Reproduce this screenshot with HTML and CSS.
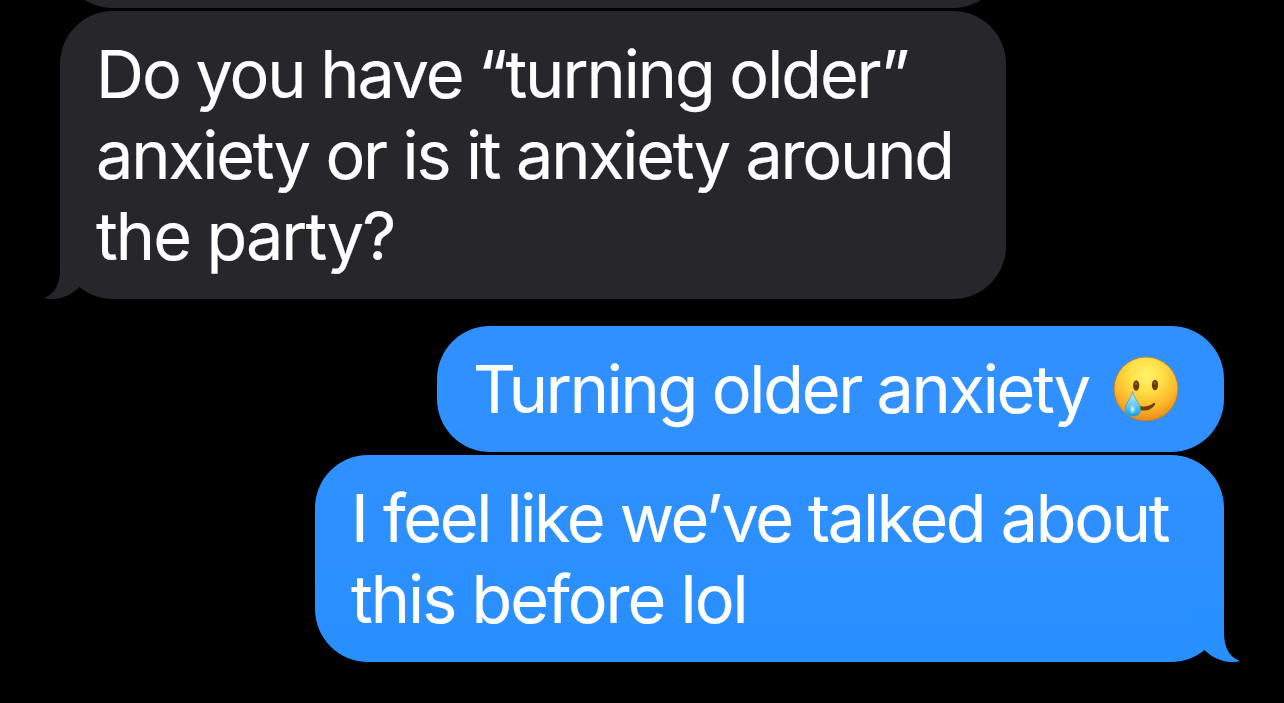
FILE: index.html
```
<!DOCTYPE html>
<html lang="en">
<head>
<meta charset="UTF-8">
<meta name="viewport" content="width=device-width, initial-scale=1.0">
<title>Messages</title>
<link rel="stylesheet" href="styles.css">
</head>
<body>

<div class="chat">
    <div class="bubble received previous"></div>

    <div class="bubble received last">
        <span class="line line-1">Do you have “turning older”</span>
        <span class="line line-2">anxiety or is it anxiety around</span>
        <span class="line line-3">the party?</span>
        <svg class="tail" viewBox="0 0 46 53">
            <path d="M16 0V23C16 37 12 47 0 52.3C13 55 27 50 35.5 41L46 0Z"/>
        </svg>
    </div>

    <div class="bubble sent first">
        <span class="line line-4">Turning older anxiety</span>
        <svg class="emoji" viewBox="0 0 66 66">
            <defs>
                <radialGradient id="face" cx="0.5" cy="0.28" r="0.72">
                    <stop offset="0" stop-color="#fff36b"/>
                    <stop offset="0.35" stop-color="#ffe047"/>
                    <stop offset="0.72" stop-color="#fcb62a"/>
                    <stop offset="1" stop-color="#e88a18"/>
                </radialGradient>
                <linearGradient id="tear" x1="0" y1="0" x2="0" y2="1">
                    <stop offset="0" stop-color="#c9f1fb"/>
                    <stop offset="0.5" stop-color="#6fcdf2"/>
                    <stop offset="1" stop-color="#149fe0"/>
                </linearGradient>
                <radialGradient id="shine" cx="0.5" cy="0.6" r="0.5">
                    <stop offset="0" stop-color="#eaffff"/>
                    <stop offset="1" stop-color="#7fd8f5" stop-opacity="0"/>
                </radialGradient>
            </defs>
            <circle cx="33" cy="33" r="32" fill="url(#face)" stroke="#bd792d" stroke-width="0.8"/>
            <ellipse cx="23.2" cy="29.5" rx="3.1" ry="5.2" fill="#6b3c08"/>
            <ellipse cx="42" cy="29" rx="3.1" ry="5.2" fill="#6b3c08"/>
            <ellipse cx="23" cy="27.5" rx="1.2" ry="1.6" fill="#956024"/>
            <ellipse cx="41.8" cy="27" rx="1.2" ry="1.6" fill="#956024"/>
            <path d="M25 49.5C31 51.5 37 50 40.5 47C41.5 46 42.7 47.4 42 48.7C38.5 54.5 31 56 25 53Z" fill="#70400b"/>
            <path d="M19.5 35.5C21 43 27.5 47.5 27.5 53.5C27.5 58 24.5 60 20 60C15 60 12 58 12 53.5C12 47.5 18 43 19.5 35.5Z" fill="url(#tear)" stroke="#259fd2" stroke-width="0.7"/>
            <ellipse cx="19.5" cy="52" rx="4" ry="6" fill="url(#shine)"/>
        </svg>
    </div>

    <div class="bubble sent last">
        <span class="line line-5">I feel like we’ve talked about</span>
        <span class="line line-6">this before lol</span>
        <svg class="tail" viewBox="0 0 46 53">
            <path d="M16 0V23C16 37 12 47 0 52.3C13 55 27 50 35.5 41L46 0Z"/>
        </svg>
    </div>
</div>

</body>
</html>
```
FILE: styles.css
```
body {
    background-color: #000;
    color: #fff;
    font-family: Inter, "Liberation Sans", sans-serif;
    font-size: 66.5px;
    line-height: 81px;
    margin: 0;
    overflow: hidden;
}

.chat {
    height: 703px;
    padding: 0 60px;
    box-sizing: border-box;
    display: flex;
    flex-direction: column;
    overflow: hidden;
}

.bubble {
    position: relative;
    box-sizing: border-box;
    padding: 23px 36px 22px;
    border-radius: 53px;
    flex-shrink: 0;
}

.received {
    align-self: flex-start;
    width: 946px;
    background-color: #27262b;
    fill: #27262b;
}

.sent {
    align-self: flex-end;
    background-color: #3090ff;
    fill: #288fff;
}

.previous {
    height: 126px;
    margin-top: -118px;
    margin-bottom: 3px;
}

.first {
    display: flex;
    align-items: center;
    width: 787px;
    margin-top: 27px;
    margin-bottom: 3px;
}

.sent.last {
    width: 909px;
    background: linear-gradient(#3090ff, #288fff);
}

.line {
    display: block;
    white-space: nowrap;
    -webkit-text-stroke: 0.15px #fff;
}

.line-1 {
    letter-spacing: -2.05px;
    word-spacing: -1px;
}

.line-2 {
    letter-spacing: -2.2px;
    word-spacing: 0.1px;
}

.line-3 {
    letter-spacing: -1.9px;
    word-spacing: -0.5px;
}

.line-4 {
    letter-spacing: -2.25px;
    word-spacing: -0.9px;
}

.line-5 {
    letter-spacing: -2.3px;
    word-spacing: 0;
}

.line-6 {
    letter-spacing: -2px;
    word-spacing: -0.4px;
}

.tail {
    position: absolute;
    bottom: 0;
    left: -16px;
    width: 46px;
    height: 53px;
}

.sent .tail {
    left: auto;
    right: -16px;
    transform: scaleX(-1);
}

.emoji {
    width: 66px;
    height: 66px;
    margin-left: auto;
    margin-right: 9px;
    margin-bottom: 1px;
    flex-shrink: 0;
}
```
